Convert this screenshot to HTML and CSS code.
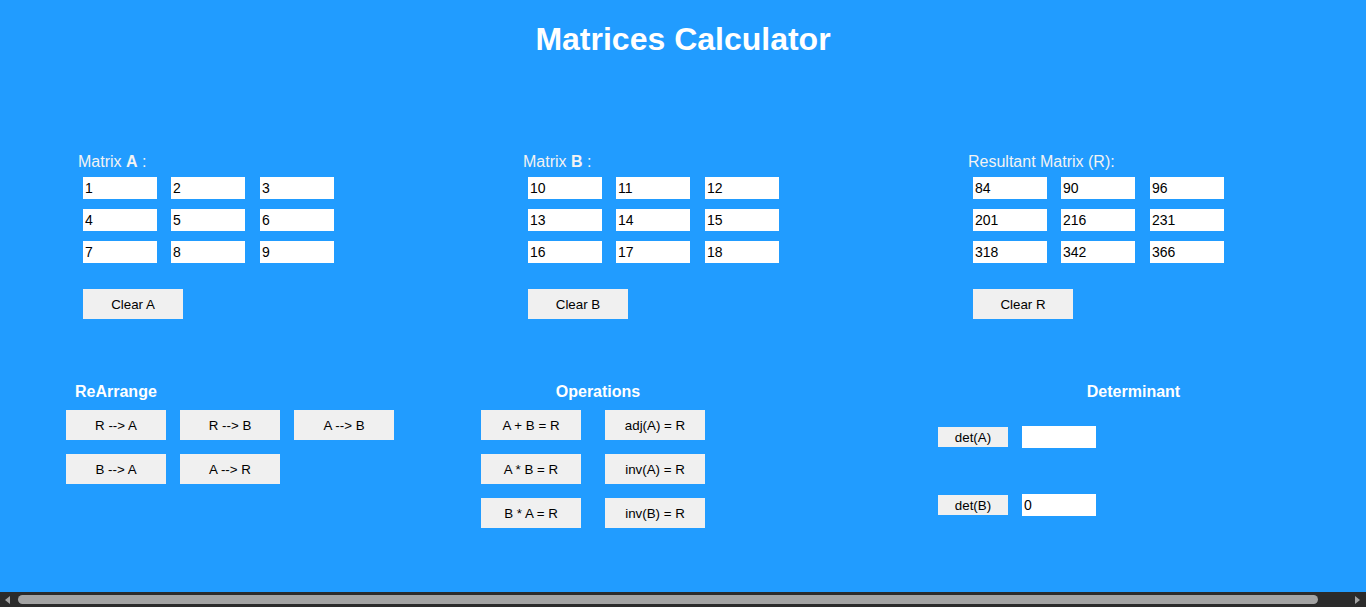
FILE: index.html
```html
<!DOCTYPE html>
<html lang="en">
<head>
<meta charset="utf-8">
<title>Matrices Calculator</title>
<link rel="stylesheet" href="styles.css">
</head>
<body>
<h1 class="title">Matrices Calculator</h1>

<section class="matrices">
  <div class="matrix">
    <div class="matrix-label">Matrix <b>A</b> :</div>
    <div class="cells">
      <input class="cell" value="1"><input class="cell" value="2"><input class="cell" value="3">
      <input class="cell" value="4"><input class="cell" value="5"><input class="cell" value="6">
      <input class="cell" value="7"><input class="cell" value="8"><input class="cell" value="9">
    </div>
    <button class="btn clear">Clear A</button>
  </div>
  <div class="matrix">
    <div class="matrix-label">Matrix <b>B</b> :</div>
    <div class="cells">
      <input class="cell" value="10"><input class="cell" value="11"><input class="cell" value="12">
      <input class="cell" value="13"><input class="cell" value="14"><input class="cell" value="15">
      <input class="cell" value="16"><input class="cell" value="17"><input class="cell" value="18">
    </div>
    <button class="btn clear">Clear B</button>
  </div>
  <div class="matrix">
    <div class="matrix-label">Resultant Matrix (R):</div>
    <div class="cells">
      <input class="cell" value="84"><input class="cell" value="90"><input class="cell" value="96">
      <input class="cell" value="201"><input class="cell" value="216"><input class="cell" value="231">
      <input class="cell" value="318"><input class="cell" value="342"><input class="cell" value="366">
    </div>
    <button class="btn clear">Clear R</button>
  </div>
</section>

<section class="tools">
  <div class="tool rearrange">
    <h3 class="tool-title">ReArrange</h3>
    <div class="btn-grid three">
      <button class="btn">R --&gt; A</button>
      <button class="btn">R --&gt; B</button>
      <button class="btn">A --&gt; B</button>
      <button class="btn">B --&gt; A</button>
      <button class="btn">A --&gt; R</button>
    </div>
  </div>
  <div class="tool operations">
    <h3 class="tool-title">Operations</h3>
    <div class="btn-grid two">
      <button class="btn">A + B = R</button>
      <button class="btn">adj(A) = R</button>
      <button class="btn">A * B = R</button>
      <button class="btn">inv(A) = R</button>
      <button class="btn">B * A = R</button>
      <button class="btn">inv(B) = R</button>
    </div>
  </div>
  <div class="tool determinant">
    <h3 class="tool-title">Determinant</h3>
    <div class="det-row first">
      <button class="btn det">det(A)</button>
      <input class="cell" value="">
    </div>
    <div class="det-row">
      <button class="btn det">det(B)</button>
      <input class="cell" value="0">
    </div>
  </div>
</section>

<div class="hscroll" aria-hidden="true">
  <span class="arrow left"></span>
  <div class="track"><div class="thumb"></div></div>
  <span class="arrow right"></span>
</div>
</body>
</html>
```

FILE: styles.css
```css
html {
  background: #219cff;
  overflow: hidden;
}
body {
  margin: 0 8px;
  background: #219cff;
  font-family: "Liberation Sans", Arial, sans-serif;
  color: #fff;
}
.title {
  margin: 21px 0 0;
  font-size: 32px;
  line-height: 37px;
  font-weight: bold;
  text-align: center;
  color: #fff;
}

.matrices {
  margin-top: 95px;
  padding-left: 70px;
  display: grid;
  grid-template-columns: 445px 445px 1fr;
}
.matrix-label {
  font-size: 16px;
  line-height: 18px;
  color: #f3f3f3;
  margin-bottom: 6px;
}
.cells {
  margin-left: 5px;
  display: grid;
  grid-template-columns: repeat(3, 74px);
  column-gap: 14px;
  row-gap: 10px;
}
.cells .cell:nth-child(3n) {
  margin-left: 1px;
}
.cell {
  box-sizing: border-box;
  width: 74px;
  height: 22px;
  border: none;
  margin: 0;
  padding: 0 2px;
  background: #fff;
  color: #000;
  font-family: "Liberation Sans", Arial, sans-serif;
  font-size: 14px;
  outline: none;
}
.btn {
  box-sizing: border-box;
  width: 100px;
  height: 30px;
  border: none;
  margin: 0;
  padding: 0;
  background: #f0f0f0;
  color: #000;
  font-family: "Liberation Sans", Arial, sans-serif;
  font-size: 13.33px;
}
.clear {
  display: block;
  margin: 26px 0 0 5px;
}

.tools {
  margin-top: 64px;
  padding-left: 58px;
  display: grid;
  grid-template-columns: 415px 457px 391px;
  align-items: start;
}
.tool-title {
  margin: 0 0 9px;
  font-size: 16px;
  line-height: 18px;
  font-weight: bold;
  color: #fff;
}
.rearrange .tool-title {
  padding-left: 9px;
}
.operations .tool-title {
  width: 224px;
  padding-left: 10px;
  box-sizing: border-box;
  text-align: center;
}
.determinant .tool-title {
  text-align: center;
}
.btn-grid {
  display: grid;
  row-gap: 14px;
}
.btn-grid.three {
  grid-template-columns: repeat(3, 100px);
  column-gap: 14px;
}
.btn-grid.two {
  grid-template-columns: repeat(2, 100px);
  column-gap: 24px;
}
.det-row {
  display: flex;
  align-items: center;
  gap: 14px;
  margin-top: 46px;
}
.det-row.first {
  margin-top: 25px;
}
.btn.det {
  width: 70px;
  height: 20px;
}

/* horizontal scrollbar overlaying the bottom edge */
.hscroll {
  position: fixed;
  left: 0;
  right: 0;
  bottom: 0;
  height: 15px;
  background: #2b2b2b;
  display: flex;
  align-items: center;
}
.arrow {
  flex: none;
  width: 0;
  height: 0;
  border-top: 4px solid transparent;
  border-bottom: 4px solid transparent;
}
.arrow.left {
  border-right: 5px solid #a3a3a3;
  margin: 0 8px 0 5px;
}
.arrow.right {
  border-left: 5px solid #a3a3a3;
  margin: 0 6px 0 5px;
}
.track {
  flex: 1;
  height: 15px;
  display: flex;
  align-items: center;
}
.thumb {
  width: 1300px;
  height: 9px;
  border-radius: 5px;
  background: #a3a3a3;
}
```
